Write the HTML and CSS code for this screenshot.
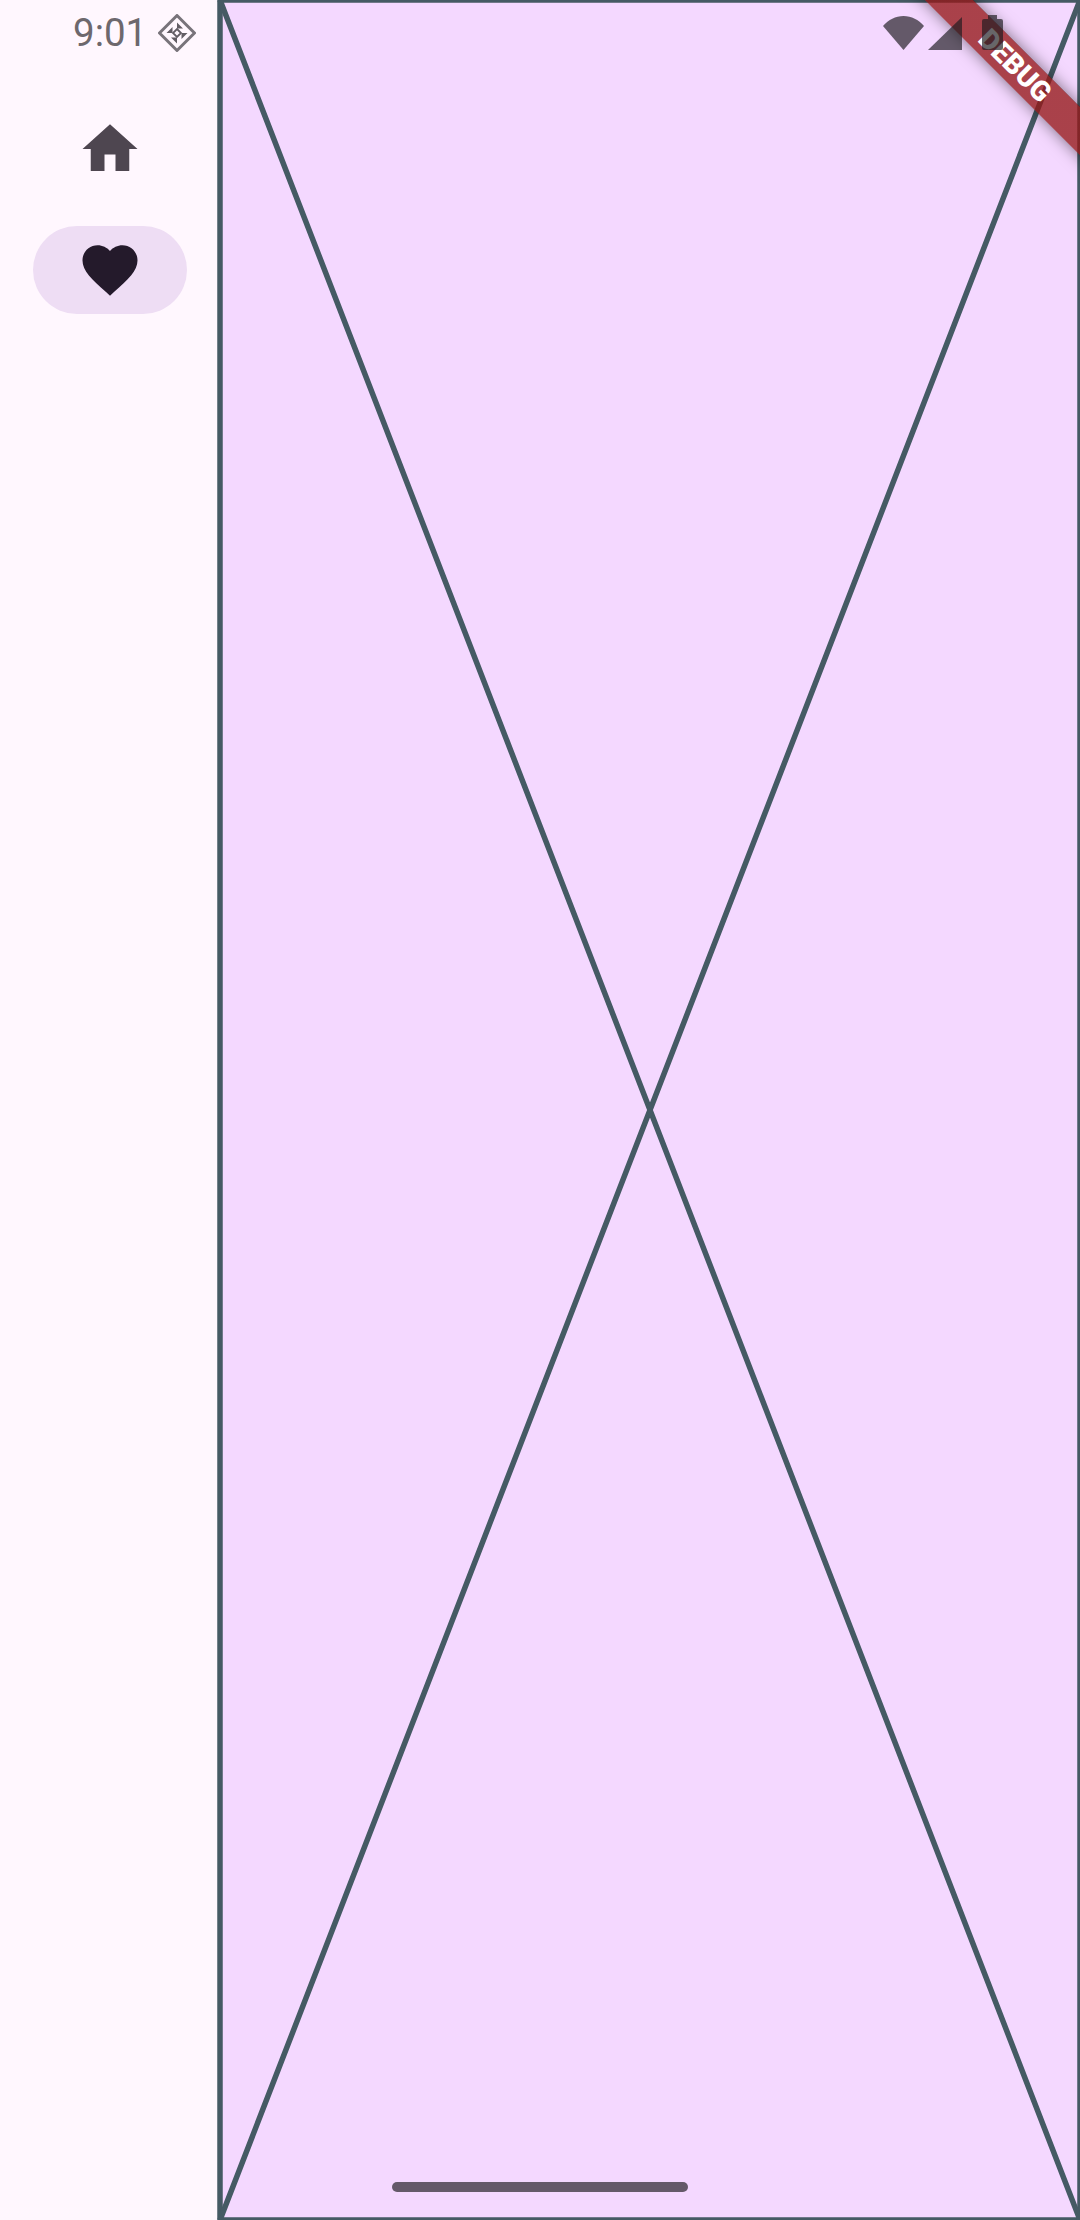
FILE: index.html
```html
<!DOCTYPE html>
<html lang="en">
<head>
    <meta charset="UTF-8">
    <meta name="viewport" content="width=device-width, initial-scale=1.0">
    <title>Navigation rail</title>
    <link rel="stylesheet" href="styles.css">
</head>
<body>

    <div class="app">
        <aside class="rail">
            <div class="status-left">
                <span class="time">9:01</span>
                <svg class="status-debug" viewBox="0 0 38 38">
                    <path d="M19 1.500 36.500 19 19 36.500 1.500 19Z" fill="none" stroke="#78737a" stroke-width="3" stroke-linejoin="round"/>
                    <path d="M19 8.500 25 14.500H19ZM29.500 19 23.500 25V19ZM19 29.500 13 23.500H19ZM8.500 19 14.500 13V19Z" fill="#625d64"/>
                    <path d="M19 15 23 19 19 23 15 19Z" fill="none" stroke="#625d64" stroke-width="1.8"/>
                </svg>
            </div>
            <nav class="rail-items">
                <div class="rail-item">
                    <svg class="rail-icon" viewBox="0 0 24 24"><path fill="#4e4650" d="M10 20v-6h4v6h5v-8h3L12 3 2 12h3v8z"/></svg>
                </div>
                <div class="rail-item selected">
                    <svg class="rail-icon" viewBox="0 0 24 24"><path fill="#241a2b" d="M12 21.35l-1.45-1.32C5.4 15.36 2 12.28 2 8.5 2 5.42 4.42 3 7.5 3c1.74 0 3.41.81 4.500 2.09C13.09 3.810 14.76 3 16.5 3 19.58 3 22 5.42 22 8.5c0 3.78-3.4 6.86-8.55 11.54L12 21.35z"/></svg>
                </div>
            </nav>
        </aside>

        <main class="content">
            <svg class="placeholder" viewBox="0 0 860 2220">
                <g fill="none" stroke="#455a64" stroke-width="5.5">
                    <rect x="0" y="0" width="860" height="2220"/>
                    <path d="M0 0 860 2220M860 0 0 2220"/>
                </g>
            </svg>
        </main>

        <div class="home-bar"></div>

        <div class="banner"><span class="banner-text">DEBUG</span></div>

        <!-- system icons sit on top of the banner -->
        <svg class="status-right" viewBox="0 0 120 36">
            <path d="M0 11C5.500 4.700 12.500 1 20.500 1S35.500 4.700 41 11L20.500 35Z"/>
            <path d="M45 35 79 2V35Z"/>
            <path d="M105 0H114V4H118Q120 4 120 6V33Q120 35 118 35H101Q99 35 99 33V6Q99 4 101 4H105Z"/>
        </svg>
    </div>

</body>
</html>
```

FILE: styles.css
```css
body {
    margin: 0;
    overflow: hidden;
    font-family: Roboto, sans-serif;
}
.app {
    display: flex;
    position: relative;
    width: 1080px;
    height: 2220px;
    overflow: hidden;
}
.rail {
    width: 220px;
    flex-shrink: 0;
    background-color: #fff7fe;
}
.status-left {
    display: flex;
    align-items: center;
    gap: 11px;
    height: 66px;
    padding-left: 73px;
}
.time {
    font-size: 38.5px;
    line-height: 66px;
    color: #6d686d;
}
.status-debug {
    width: 38px;
    height: 38px;
}
.rail-items {
    display: flex;
    flex-direction: column;
    align-items: center;
    gap: 33px;
    margin-top: 39px;
}
.rail-item {
    display: flex;
    align-items: center;
    justify-content: center;
    width: 154px;
    height: 88px;
    border-radius: 44px;
}
.rail-item.selected {
    background-color: #eeddf4;
}
.rail-icon {
    width: 66px;
    height: 66px;
}
.content {
    flex: 1;
    background-color: #f4d8ff;
}
.placeholder {
    display: block;
    width: 860px;
    height: 2220px;
    overflow: visible;
}
.status-right {
    position: absolute;
    top: 15px;
    left: 883px;
    width: 120px;
    height: 36px;
    fill: rgba(29, 27, 32, 0.67);
}
.home-bar {
    position: absolute;
    top: 2182px;
    left: 392px;
    width: 296px;
    height: 10px;
    border-radius: 5px;
    background-color: rgba(29, 27, 32, 0.67);
}
.banner {
    position: absolute;
    top: 49px;
    left: 815px;
    display: flex;
    align-items: center;
    justify-content: center;
    width: 400px;
    height: 33.5px;
    background: linear-gradient(rgba(183, 28, 28, 0.63), rgba(183, 28, 28, 0.63)), rgba(0, 0, 0, 0.4);
    box-shadow: 0 0 16px rgba(0, 0, 0, 0.5);
    transform: rotate(45deg);
}
.banner-text {
    font-size: 28px;
    font-weight: 900;
    line-height: 28px;
    color: #fff;
}
```
